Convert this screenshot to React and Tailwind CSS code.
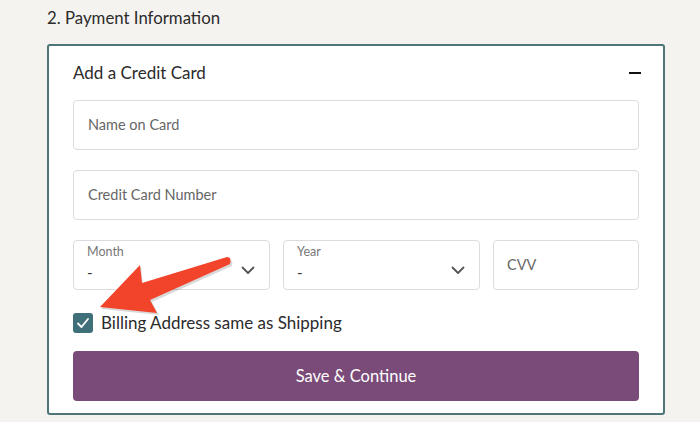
import React from "react";

const font = { fontFamily: "Lato, 'Noto Sans', sans-serif" };

const Chevron = () => (
  <svg width="14" height="9" viewBox="0 0 14 9" className="shrink-0">
    <path d="M1.5 1.5 L7 7 L12.5 1.5" fill="none" stroke="#555" strokeWidth="1.8" strokeLinecap="round" strokeLinejoin="round" />
  </svg>
);

const TextField = ({ placeholder, className = "" }) => (
  <div className={`h-[50px] border border-[#dcdcdc] rounded-[4px] bg-white flex items-center pl-[14px] ${className}`}>
    <span className="text-[14.5px] text-[#666]">{placeholder}</span>
  </div>
);

const SelectField = ({ label }) => (
  <div className="h-[50px] w-[197px] border border-[#dcdcdc] rounded-[4px] bg-white flex items-center justify-between pl-[13px] pr-[14px]">
    <div className="flex flex-col leading-none">
      <span className="text-[12.5px] text-[#777] mt-[-4px]">{label}</span>
      <span className="text-[15px] text-[#333] mt-[6px]">-</span>
    </div>
    <div className="mt-[10px]">
      <Chevron />
    </div>
  </div>
);

export default function App() {
  return (
    <div className="relative w-[700px] h-[422px] overflow-hidden bg-[#f4f3ef]" style={font}>
      <div className="pl-[47px] pt-[7px]">
        <h2 className="text-[16.8px] leading-[22px] text-[#2b2b2b]">2. Payment Information</h2>

        <div className="mt-[15px] w-[618px] border-2 border-[#4e7577] rounded-[3px] bg-white px-[24px] pt-[15px] pb-[12px]">
          <div className="flex items-center justify-between h-[24px] mb-[15px]">
            <span className="text-[17px] text-[#2b2b2b]">Add a Credit Card</span>
            <span className="block w-[12px] h-[2px] bg-[#111] mr-[-2px]"></span>
          </div>

          <TextField placeholder="Name on Card" />
          <TextField placeholder="Credit Card Number" className="mt-[20px]" />

          <div className="mt-[20px] flex gap-[13px]">
            <SelectField label="Month" />
            <SelectField label="Year" />
            <div className="h-[50px] flex-1 border border-[#dcdcdc] rounded-[4px] bg-white flex items-center pl-[13px]">
              <span className="text-[14.5px] text-[#666]">CVV</span>
            </div>
          </div>

          <div className="mt-[23px] h-[20px] flex items-center gap-[8px]">
            <div className="w-[20px] h-[20px] rounded-[3px] bg-[#3f6f78] flex items-center justify-center">
              <svg width="14" height="12" viewBox="0 0 14 12">
                <path d="M2 6.5 L5.5 10 L12 2" fill="none" stroke="#fff" strokeWidth="1.8" strokeLinecap="round" strokeLinejoin="round" />
              </svg>
            </div>
            <span className="text-[17px] leading-[20px] text-[#2b2b2b]">Billing Address same as Shipping</span>
          </div>

          <button className="mt-[18px] w-full h-[50px] rounded-[4px] bg-[#7a4b78] text-white text-[16.5px]">
            Save &amp; Continue
          </button>
        </div>
      </div>

      <svg className="absolute left-0 top-0 pointer-events-none" width="700" height="422" viewBox="0 0 700 422">
        <path
          d="M101 309 L141 267 L143 285 L228 259 Q234 260 232 266 L152 302 L159 315 Z"
          fill="rgba(0,0,0,0.15)"
        />
        <path
          d="M100 307 L140 265 L142 283 L227 257 Q232 257 230 264 L150 300 L157 313 Z"
          fill="#f2432b"
          strokeLinejoin="round"
        />
      </svg>
    </div>
  );
}
